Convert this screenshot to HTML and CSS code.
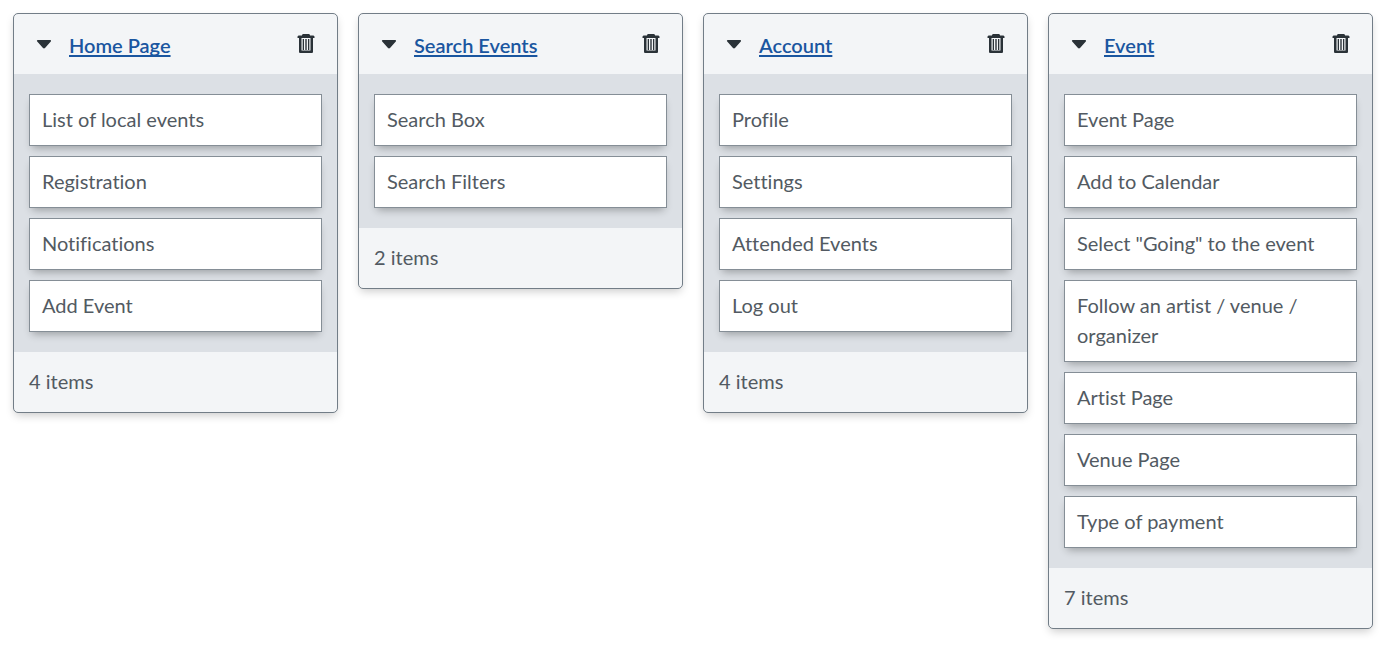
FILE: index.html
```html
<!DOCTYPE html>
<html lang="en">
<head>
<meta charset="utf-8">
<title>Card sort</title>
<link rel="stylesheet" href="styles.css">
</head>
<body>
<svg class="sprite" aria-hidden="true">
  <symbol id="caret" viewBox="0 0 16 10"><path d="M1.800 1h12.400c.9 0 1.200.8.6 1.400L9 9.100c-.6.6-1.400.6-2 0L1.200 2.400C.6 1.800.9 1 1.800 1z"/></symbol>
  <symbol id="trash" viewBox="0 0 18 20"><path fill-rule="evenodd" d="M5 1.500C5 .6 5.500 0 6.500 0h5c1 0 1.500.6 1.500 1.500h3.500l1 1V4H16v13.500c0 1-.5 1.500-1.500 1.500h-11C2.500 19 2 18.500 2 17.500V4H.5V2.500l1-1zM4.500 4v12.500h9V4z"/><path d="M5.700 5H7v11H5.700zM8.300 5h1.400v11H8.300zM11 5h1.300v11H11z"/></symbol>
</svg>
<main class="board">
  <section class="category">
    <header class="category-header">
      <button class="icon-button" type="button" aria-label="Collapse Home Page"><svg class="caret"><use href="#caret"/></svg></button>
      <h2 class="category-title"><a href="#">Home Page</a></h2>
      <button class="icon-button delete" type="button" aria-label="Delete Home Page"><svg class="trash"><use href="#trash"/></svg></button>
    </header>
    <ul class="cards">
      <li class="card">List of local events</li>
      <li class="card">Registration</li>
      <li class="card">Notifications</li>
      <li class="card">Add Event</li>
    </ul>
    <footer class="category-footer">4 items</footer>
  </section>
  <section class="category">
    <header class="category-header">
      <button class="icon-button" type="button" aria-label="Collapse Search Events"><svg class="caret"><use href="#caret"/></svg></button>
      <h2 class="category-title"><a href="#">Search Events</a></h2>
      <button class="icon-button delete" type="button" aria-label="Delete Search Events"><svg class="trash"><use href="#trash"/></svg></button>
    </header>
    <ul class="cards">
      <li class="card">Search Box</li>
      <li class="card">Search Filters</li>
    </ul>
    <footer class="category-footer">2 items</footer>
  </section>
  <section class="category">
    <header class="category-header">
      <button class="icon-button" type="button" aria-label="Collapse Account"><svg class="caret"><use href="#caret"/></svg></button>
      <h2 class="category-title"><a href="#">Account</a></h2>
      <button class="icon-button delete" type="button" aria-label="Delete Account"><svg class="trash"><use href="#trash"/></svg></button>
    </header>
    <ul class="cards">
      <li class="card">Profile</li>
      <li class="card">Settings</li>
      <li class="card">Attended Events</li>
      <li class="card">Log out</li>
    </ul>
    <footer class="category-footer">4 items</footer>
  </section>
  <section class="category">
    <header class="category-header">
      <button class="icon-button" type="button" aria-label="Collapse Event"><svg class="caret"><use href="#caret"/></svg></button>
      <h2 class="category-title"><a href="#">Event</a></h2>
      <button class="icon-button delete" type="button" aria-label="Delete Event"><svg class="trash"><use href="#trash"/></svg></button>
    </header>
    <ul class="cards">
      <li class="card">Event Page</li>
      <li class="card">Add to Calendar</li>
      <li class="card">Select "Going" to the event</li>
      <li class="card">Follow an artist / venue / organizer</li>
      <li class="card">Artist Page</li>
      <li class="card">Venue Page</li>
      <li class="card">Type of payment</li>
    </ul>
    <footer class="category-footer">7 items</footer>
  </section>
</main>
</body>
</html>
```

FILE: styles.css
```css
* {
  box-sizing: border-box;
}

body {
  margin: 0;
  background: #fff;
  color: #525a62;
  font: 400 20px/30px Lato, "Open Sans", sans-serif;
  font-variant-ligatures: none;
}

.sprite {
  display: none;
}

.board {
  display: grid;
  grid-template-columns: repeat(4, minmax(0, 1fr));
  gap: 20px;
  align-items: start;
  padding: 13px 20px 20px 13px;
}

.category {
  overflow: hidden;
  border: 1px solid #727d87;
  border-radius: 5px;
  background: #f3f5f7;
  box-shadow: 0 4px 10px -2px rgba(0, 0, 0, 0.22);
}

.category-header {
  display: flex;
  align-items: center;
  height: 60px;
  padding: 2px 22px 0;
}

.icon-button {
  display: flex;
  padding: 0 0 2px;
  border: 0;
  background: none;
  color: #2a3238;
  cursor: pointer;
}

.icon-button svg {
  display: block;
  fill: currentColor;
}

.caret {
  width: 16px;
  height: 10px;
}

.trash {
  width: 18px;
  height: 20px;
}

.delete {
  margin-left: auto;
}

.category-title {
  margin: 0 0 0 17px;
  font-size: 20px;
  font-weight: 600;
}

.category-title a {
  color: #1a56a0;
  text-decoration-thickness: 2px;
  text-underline-offset: 2px;
  text-decoration-skip-ink: none;
}

.cards {
  display: flex;
  flex-direction: column;
  gap: 10px;
  margin: 0;
  padding: 20px 15px;
  background: #dce0e5;
  list-style: none;
}

.card {
  padding: 9px 12px 11px;
  border: 1px solid #858e96;
  background: #fff;
  box-shadow: 0 5px 8px -3px rgba(0, 0, 0, 0.3);
}

.category-footer {
  padding: 14px 15px 16px;
}
```
